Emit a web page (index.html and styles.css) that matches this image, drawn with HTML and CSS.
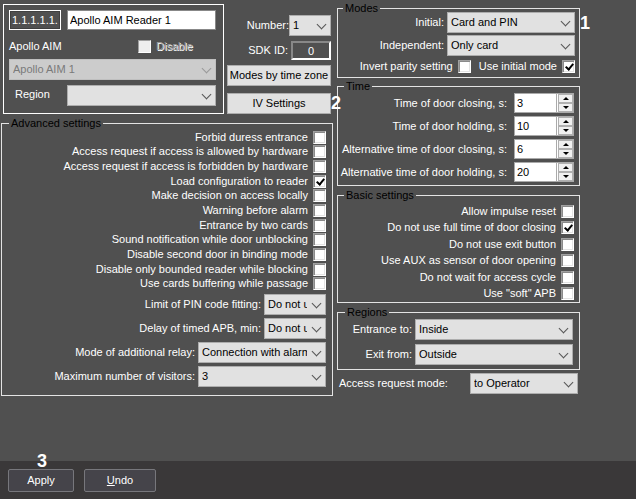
FILE: index.html
```html
<!DOCTYPE html>
<html lang="en">
<head>
    <meta charset="UTF-8">
    <meta name="viewport" content="width=device-width, initial-scale=1.0">
    <title>Apollo AIM Reader 1</title>
    <link rel="stylesheet" href="styles.css">
</head>
<body>
    <main class="settings">
        <div class="column left">
            <div class="top">
                <!-- Reader identity -->
                <div class="identity">
                    <input class="reader-id" type="text" value="1.1.1.1.1.1" aria-label="Id" readonly>
                    <input class="reader-name" type="text" value="Apollo AIM Reader 1" aria-label="Name">
                    <label class="parent-label" for="parent">Apollo AIM</label>
                    <label class="check disable"><input type="checkbox" disabled> <span>Disable</span></label>
                    <div class="select parent disabled">
                        <select id="parent" disabled><option>Apollo AIM 1</option></select>
                    </div>
                    <label class="region-label" for="region">Region</label>
                    <div class="select region">
                        <select id="region"><option></option></select>
                    </div>
                </div>
                <div class="side">
                    <div class="side-row">
                        <label for="number">Number:</label>
                        <div class="select number"><select id="number"><option>1</option></select></div>
                    </div>
                    <div class="side-row sdk">
                        <label for="sdk">SDK ID:</label>
                        <input id="sdk" class="sdk-id" type="text" value="0" readonly>
                    </div>
                    <button type="button" class="btn">Modes by time zone</button>
                    <button type="button" class="btn marked">IV Settings<span class="mark mark-2">2</span></button>
                </div>
            </div>

            <!-- Advanced settings -->
            <fieldset class="advanced">
                <legend>Advanced settings</legend>
                <div class="checks advanced-checks">
                    <label class="check">Forbid duress entrance <input type="checkbox"></label>
                    <label class="check">Access request if access is allowed by hardware <input type="checkbox"></label>
                    <label class="check">Access request if access is forbidden by hardware <input type="checkbox"></label>
                    <label class="check">Load configuration to reader <input type="checkbox" checked></label>
                    <label class="check">Make decision on access locally <input type="checkbox"></label>
                    <label class="check">Warning before alarm <input type="checkbox"></label>
                    <label class="check">Entrance by two cards <input type="checkbox"></label>
                    <label class="check">Sound notification while door unblocking <input type="checkbox"></label>
                    <label class="check">Disable second door in binding mode <input type="checkbox"></label>
                    <label class="check">Disable only bounded reader while blocking <input type="checkbox"></label>
                    <label class="check">Use cards buffering while passage <input type="checkbox"></label>
                </div>
                <div class="fields">
                    <div class="field">
                        <label for="pin-limit">Limit of PIN code fitting:</label>
                        <div class="select short"><select id="pin-limit"><option>Do not use</option></select></div>
                    </div>
                    <div class="field">
                        <label for="apb-delay">Delay of timed APB, min:</label>
                        <div class="select short"><select id="apb-delay"><option>Do not use</option></select></div>
                    </div>
                    <div class="field">
                        <label for="relay">Mode of additional relay:</label>
                        <div class="select medium"><select id="relay"><option>Connection with alarm</option></select></div>
                    </div>
                    <div class="field">
                        <label for="visitors">Maximum number of visitors:</label>
                        <div class="select medium"><select id="visitors"><option>3</option></select></div>
                    </div>
                </div>
            </fieldset>
        </div>

        <div class="column right">
            <fieldset class="modes">
                <legend>Modes</legend>
                <div class="fields">
                    <div class="field marked">
                        <label for="initial">Initial:</label>
                        <div class="select medium"><select id="initial"><option>Card and PIN</option></select></div>
                        <span class="mark mark-1">1</span>
                    </div>
                    <div class="field">
                        <label for="independent">Independent:</label>
                        <div class="select medium"><select id="independent"><option>Only card</option></select></div>
                    </div>
                </div>
                <div class="mode-checks">
                    <label class="check">Invert parity setting <input type="checkbox"></label>
                    <label class="check">Use initial mode <input type="checkbox" checked></label>
                </div>
            </fieldset>

            <fieldset class="time">
                <legend>Time</legend>
                <div class="fields">
                    <div class="field">
                        <label for="closing">Time of door closing, s:</label>
                        <div class="spinner">
                            <input id="closing" type="text" value="3">
                            <div class="arrows"><button type="button" aria-label="Up"></button><button type="button" class="down" aria-label="Down"></button></div>
                        </div>
                    </div>
                    <div class="field">
                        <label for="holding">Time of door holding, s:</label>
                        <div class="spinner">
                            <input id="holding" type="text" value="10">
                            <div class="arrows"><button type="button" aria-label="Up"></button><button type="button" class="down" aria-label="Down"></button></div>
                        </div>
                    </div>
                    <div class="field">
                        <label for="alt-closing">Alternative time of door closing, s:</label>
                        <div class="spinner">
                            <input id="alt-closing" type="text" value="6">
                            <div class="arrows"><button type="button" aria-label="Up"></button><button type="button" class="down" aria-label="Down"></button></div>
                        </div>
                    </div>
                    <div class="field">
                        <label for="alt-holding">Alternative time of door holding, s:</label>
                        <div class="spinner">
                            <input id="alt-holding" type="text" value="20">
                            <div class="arrows"><button type="button" aria-label="Up"></button><button type="button" class="down" aria-label="Down"></button></div>
                        </div>
                    </div>
                </div>
            </fieldset>

            <fieldset class="basic">
                <legend>Basic settings</legend>
                <div class="checks basic-checks">
                    <label class="check">Allow impulse reset <input type="checkbox"></label>
                    <label class="check">Do not use full time of door closing <input type="checkbox" checked></label>
                    <label class="check">Do not use exit button <input type="checkbox"></label>
                    <label class="check">Use AUX as sensor of door opening <input type="checkbox"></label>
                    <label class="check">Do not wait for access cycle <input type="checkbox"></label>
                    <label class="check">Use "soft" APB <input type="checkbox"></label>
                </div>
            </fieldset>

            <fieldset class="regions">
                <legend>Regions</legend>
                <div class="fields">
                    <div class="field">
                        <label for="entrance">Entrance to:</label>
                        <div class="select long"><select id="entrance"><option>Inside</option></select></div>
                    </div>
                    <div class="field">
                        <label for="exit">Exit from:</label>
                        <div class="select long"><select id="exit"><option>Outside</option></select></div>
                    </div>
                </div>
            </fieldset>

            <div class="request">
                <label for="request">Access request mode:</label>
                <div class="select operator"><select id="request"><option>to Operator</option></select></div>
            </div>
        </div>
    </main>

    <footer class="actions">
        <button type="button" class="action marked">Apply<span class="mark mark-3">3</span></button>
        <button type="button" class="action undo"><u>U</u>ndo</button>
    </footer>
</body>
</html>
```
FILE: styles.css
```css
* { box-sizing: border-box; }

body {
    margin: 0;
    min-height: 100vh;
    display: flex;
    flex-direction: column;
    background: #505050;
    color: #fff;
    font-family: "Liberation Sans", Arial, sans-serif;
    font-size: 11px;
    line-height: 13px;
}
input, select, button {
    font: inherit;
    margin: 0;
}
label { white-space: nowrap; }

.settings {
    flex: 1;
    display: grid;
    grid-template-columns: 332fr 243fr;
    gap: 4px;
    padding: 2px 56px 0 1px;
}
.column {
    min-width: 0;
    display: flex;
    flex-direction: column;
}

/* Group boxes */
fieldset {
    min-width: 0;
    margin: 0;
    padding: 0 6px;
    border: 1px solid #e4e4e4;
}
legend {
    margin-left: 1px;
    padding: 0 2px;
    color: #000;
}
.fields {
    display: flex;
    flex-direction: column;
    gap: 3px;
}
.field {
    display: flex;
    justify-content: flex-end;
    align-items: center;
    gap: 3px;
}

/* Drop-downs */
.select {
    position: relative;
    height: 21px;
}
.select select {
    appearance: none;
    display: block;
    width: 100%;
    height: 100%;
    padding: 0 18px 0 3px;
    border: 1px solid #adadad;
    border-radius: 0;
    background: #e1e1e1;
    color: #000;
}
.select::after {
    content: "";
    position: absolute;
    top: 6px;
    right: 6px;
    width: 6px;
    height: 6px;
    border: solid #555;
    border-width: 0 1px 1px 0;
    transform: rotate(45deg);
    pointer-events: none;
}
.select.disabled select {
    border-color: #bfbfbf;
    background: #ccc;
    color: #7a7a7a;
    opacity: 1;
}
.select.disabled::after { border-color: #999; }
.short { width: 62px; }
.medium { width: 128px; }
.long { width: 158px; }
.operator { width: 108px; }

/* Tick boxes */
.check {
    display: flex;
    justify-content: flex-end;
    align-items: center;
    gap: 5px;
}
.check input {
    appearance: none;
    flex: none;
    position: relative;
    width: 13px;
    height: 13px;
    border: 1px solid;
    border-color: #a0a0a0 #fff #fff #a0a0a0;
    background: #fff;
    box-shadow: inset 1px 1px #8a8a8a, inset -1px -1px #e3e3e3;
}
.check input:checked::after {
    content: "";
    position: absolute;
    top: 1px;
    left: 4px;
    width: 3px;
    height: 6px;
    border: solid #000;
    border-width: 0 2px 2px 0;
    transform: rotate(40deg);
}
.checks {
    display: grid;
    grid-auto-rows: 1fr;
}
.advanced-checks { height: 161px; }
.basic-checks { height: 99px; }

/* Top left */
.top {
    display: flex;
    gap: 3px;
    padding: 2px 2px 0 2px;
}
.identity {
    flex: 1;
    display: grid;
    grid-template-columns: 52px 71px 1fr;
    grid-template-rows: 20px 29px 21px 21px;
    padding: 5px 7px 6px 5px;
    border: 1px solid #fff;
}
.reader-id, .reader-name {
    min-width: 0;
    height: 20px;
    padding: 0 2px;
    border: 1px solid #888;
}
.reader-id {
    border-color: #fff;
    outline: 1px solid #404040;
    outline-offset: -2px;
    background: #505050;
    color: #fff;
}
.reader-name {
    grid-column: 2 / 4;
    margin-left: 6px;
    color: #000;
}
.parent-label {
    grid-column: 1 / 3;
    align-self: center;
    padding-top: 4px;
}
.disable {
    justify-content: flex-start;
    padding: 4px 0 0 6px;
}
.disable input {
    background: #eee;
    box-shadow: none;
}
.disable span {
    color: #a0a0a0;
    text-shadow: 1px 1px #fff;
}
.parent { grid-column: 1 / 4; }
.region-label {
    align-self: end;
    padding-left: 6px;
}
.region {
    grid-column: 2 / 4;
    margin: 5px 0 0 6px;
    height: 21px;
}
.side {
    width: 104px;
    display: flex;
    flex-direction: column;
    padding-top: 11px;
}
.side-row {
    display: flex;
    justify-content: flex-end;
    align-items: center;
}
.number { width: 42px; }
.sdk {
    gap: 3px;
    margin: 5px 0;
}
.sdk-id {
    width: 40px;
    height: 19px;
    padding: 0;
    border: 2px solid;
    border-color: #888 #fff #fff #888;
    background: #505050;
    color: #fff;
    text-align: center;
}
.btn {
    height: 21px;
    padding: 0;
    border: 1px solid #adadad;
    background: #e1e1e1;
    color: #000;
    white-space: nowrap;
}
.btn + .btn { margin-top: 7px; }

.advanced {
    margin-top: 3px;
    padding-bottom: 8px;
}
.advanced .fields { margin-top: 3px; }

/* Right column */
.modes .fields {
    gap: 2px;
    margin-top: -3px;
}
.modes { padding: 0 4px 4px; }
.mode-checks {
    display: flex;
    justify-content: flex-end;
    gap: 8px;
    margin-top: 4px;
}
.time {
    margin-top: 2px;
    padding: 0 5px 3px;
}
.time .field { gap: 7px; }
.basic {
    margin-top: 3px;
    padding: 1px 5px 0;
}
.regions {
    margin-top: 3px;
    padding-bottom: 4px;
}
.regions .fields { gap: 4px; }
.request {
    display: flex;
    justify-content: space-between;
    align-items: center;
    padding: 3px 2px;
}

/* Number boxes with up and down arrows */
.spinner {
    width: 60px;
    height: 20px;
    display: flex;
    border: 1px solid #aaa;
    background: #fff;
}
.spinner input {
    flex: 1;
    min-width: 0;
    padding: 0 2px;
    border: 0;
    background: #fff;
    color: #000;
}
.arrows {
    width: 17px;
    display: flex;
    flex-direction: column;
    border-left: 1px solid #aaa;
    padding-left: 1px;
}
.arrows button {
    flex: 1;
    display: flex;
    justify-content: center;
    align-items: center;
    padding: 0;
    border: 1px solid #b0b0b0;
    background: #f0f0f0;
}
.arrows button::after {
    content: "";
    border: 3px solid transparent;
    border-top: 0;
    border-bottom-color: #000;
}
.arrows .down::after {
    border-top: 3px solid #000;
    border-bottom: 0;
}

/* Callout numbers */
.marked { position: relative; }
.mark {
    position: absolute;
    color: #fff;
    font-size: 18px;
    font-weight: bold;
    line-height: 18px;
}
.mark-1 {
    top: 2px;
    left: 100%;
    margin-left: 5px;
}
.mark-2 {
    top: 0;
    left: 100%;
    margin-left: 1px;
}
.mark-3 {
    bottom: 100%;
    left: 28px;
}

.actions {
    display: flex;
    gap: 10px;
    padding: 8px 8px 7px;
    background: #3a3839;
}
.action {
    width: 66px;
    height: 23px;
    padding: 0;
    border: 1px solid #77777c;
    border-radius: 2px;
    background: #45444a;
    color: #fff;
}
.undo { width: 72px; }
```
